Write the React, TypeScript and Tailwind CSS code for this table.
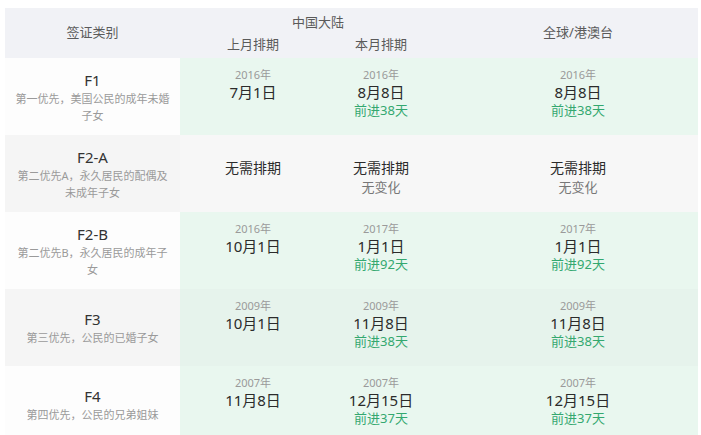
import React from 'react';

type DateInfo = { year?: string; date: string; note?: string; none?: boolean };
type Row = {
  code: string;
  desc: string;
  last: DateInfo;
  cur: DateInfo;
  world: DateInfo;
  tone: 'green' | 'gray' | 'darkgreen';
};

const rows: Row[] = [
  {
    code: 'F1',
    desc: '第一优先，美国公民的成年未婚子女',
    last: { year: '2016年', date: '7月1日' },
    cur: { year: '2016年', date: '8月8日', note: '前进38天' },
    world: { year: '2016年', date: '8月8日', note: '前进38天' },
    tone: 'green',
  },
  {
    code: 'F2-A',
    desc: '第二优先A，永久居民的配偶及未成年子女',
    last: { date: '无需排期', none: true },
    cur: { date: '无需排期', note: '无变化', none: true },
    world: { date: '无需排期', note: '无变化', none: true },
    tone: 'gray',
  },
  {
    code: 'F2-B',
    desc: '第二优先B，永久居民的成年子女',
    last: { year: '2016年', date: '10月1日' },
    cur: { year: '2017年', date: '1月1日', note: '前进92天' },
    world: { year: '2017年', date: '1月1日', note: '前进92天' },
    tone: 'green',
  },
  {
    code: 'F3',
    desc: '第三优先，公民的已婚子女',
    last: { year: '2009年', date: '10月1日' },
    cur: { year: '2009年', date: '11月8日', note: '前进38天' },
    world: { year: '2009年', date: '11月8日', note: '前进38天' },
    tone: 'darkgreen',
  },
  {
    code: 'F4',
    desc: '第四优先，公民的兄弟姐妹',
    last: { year: '2007年', date: '11月8日' },
    cur: { year: '2007年', date: '12月15日', note: '前进37天' },
    world: { year: '2007年', date: '12月15日', note: '前进37天' },
    tone: 'green',
  },
];

const DateCell = ({ info, bg, extra = '' }: { info: DateInfo; bg: string; extra?: string }) => {
  if (info.none) {
    return (
      <div className={`flex flex-col items-center pt-[24px] ${bg} ${extra}`}>
        <div className="text-[14px] leading-[18px] text-[#2b2b2b]">{info.date}</div>
        {info.note && <div className="text-[13px] leading-[20px] text-[#777]">{info.note}</div>}
      </div>
    );
  }
  return (
    <div className={`flex flex-col items-center pt-[9px] ${bg} ${extra}`}>
      <div className="text-[11px] leading-[16px] text-[#9a9a9a]">{info.year}</div>
      <div className="text-[15px] leading-[18px] text-[#2b2b2b]">{info.date}</div>
      {info.note && <div className="text-[13px] leading-[19px] text-[#34a86f]">{info.note}</div>}
    </div>
  );
};

export default function App() {
  return (
    <div className="w-[701px] h-[435px] overflow-hidden bg-white pt-[8px] pl-[5px] pr-[3px] font-['Noto_Sans','Noto_Sans_CJK_SC',sans-serif]">
      {/* header */}
      <div className="grid grid-cols-[175px_256px_1fr] h-[50px] bg-[#f1f2f6] text-[13px] text-[#5a5a5a]">
        <div className="flex items-center justify-center">签证类别</div>
        <div className="flex flex-col pt-[5px]">
          <div className="leading-[18px] text-center pl-[20px]">中国大陆</div>
          <div className="flex mt-[4px] leading-[18px]">
            <div className="w-[146px] text-center">上月排期</div>
            <div className="w-[110px] text-center">本月排期</div>
          </div>
        </div>
        <div className="flex items-center justify-center pl-[22px]">全球/港澳台</div>
      </div>

      {/* body */}
      {rows.map((r) => {
        const leftBg = r.tone === 'green' ? 'bg-[#fdfdfd]' : 'bg-[#f5f5f5]';
        const dataBg =
          r.tone === 'green' ? 'bg-[#e9f7ef]' : r.tone === 'gray' ? 'bg-[#f7f7f7]' : 'bg-[#e6f3ec]';
        return (
          <div key={r.code} className="grid grid-cols-[175px_146px_110px_1fr] h-[77px]">
            <div className={`flex flex-col items-center justify-center ${leftBg}`}>
              <div className="text-[15px] leading-[20px] text-[#333]">{r.code}</div>
              <div className="w-[157px] text-center text-[11px] leading-[17px] text-[#9a9a9a]">{r.desc}</div>
            </div>
            <DateCell info={r.last} bg={dataBg} />
            <DateCell info={r.cur} bg={dataBg} />
            <DateCell info={r.world} bg={dataBg} extra="pl-[22px]" />
          </div>
        );
      })}
    </div>
  );
}
